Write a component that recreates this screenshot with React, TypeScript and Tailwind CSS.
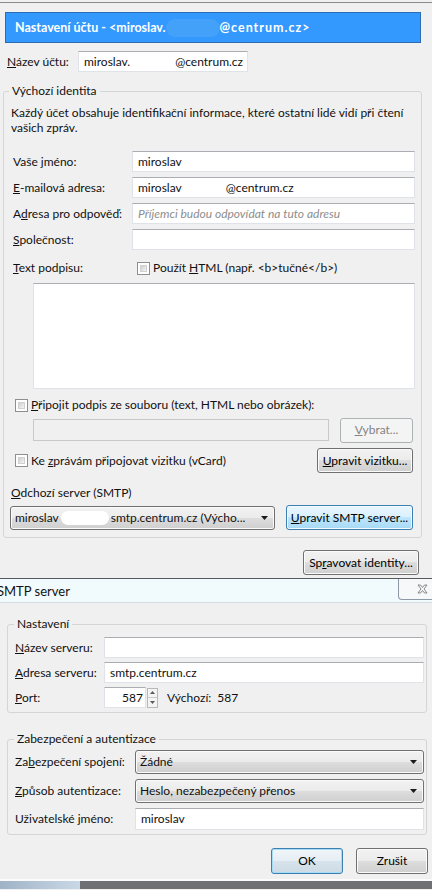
import React from 'react';

type Kind = 'normal' | 'hot' | 'default' | 'disabled';

const btnStyles: Record<Kind, string> = {
  normal:
    'border-[#707070] bg-[linear-gradient(#f2f2f2,#ebebeb_50%,#dddddd_50%,#cfcfcf)] shadow-[inset_0_0_0_1px_#fbfbfb] text-black',
  hot: 'border-[#3c7fb1] bg-[linear-gradient(#eaf6fd,#d9f0fc_50%,#bee6fd_50%,#a7d9f5)] shadow-[inset_0_0_0_1px_#f4fbfe] text-black',
  default:
    'border-[#3c7fb1] bg-[linear-gradient(#f0f5f9,#e6eef4_50%,#d7e3ec_50%,#cddbe5)] shadow-[inset_0_0_0_1px_#a6dcf6] text-black',
  disabled: 'border-[#adb2b5] bg-[#f4f4f4] text-[#838383]',
};

const Btn = ({
  kind = 'normal',
  className = '',
  children,
}: {
  kind?: Kind;
  className?: string;
  children: React.ReactNode;
}) => (
  <div
    className={`flex items-center justify-center rounded-[3px] border shrink-0 ${btnStyles[kind]} ${className}`}
  >
    {children}
  </div>
);

const Field = ({ className = '', children }: { className?: string; children?: React.ReactNode }) => (
  <div
    className={`flex items-center bg-white border border-[#dfe3e8] border-t-[#abadb3] shrink-0 whitespace-nowrap overflow-hidden ${className}`}
  >
    {children}
  </div>
);

const Check = () => (
  <span className="inline-block w-[13px] h-[13px] border border-[#8e8f8f] bg-white p-[2px] shrink-0">
    <span className="block w-full h-full bg-[linear-gradient(135deg,#cfcfcf,#f4f4f4)] border border-[#d0d0d0]" />
  </span>
);

const Arrow = () => (
  <svg width="7" height="4" viewBox="0 0 7 4" className="shrink-0">
    <path d="M0 0h7L3.5 4z" fill="#1a1a1a" />
  </svg>
);

const Combo = ({ className = '', children }: { className?: string; children: React.ReactNode }) => (
  <div
    className={`flex items-center rounded-[3px] border border-[#707070] bg-[linear-gradient(#f2f2f2,#ebebeb_50%,#dddddd_50%,#cfcfcf)] shadow-[inset_0_0_0_1px_#fbfbfb] pl-[4px] pr-[6px] shrink-0 whitespace-nowrap ${className}`}
  >
    <div className="flex-1 flex items-center overflow-hidden">{children}</div>
    <Arrow />
  </div>
);

export default function App() {
  return (
    <div className="relative w-[432px] h-[890px] overflow-hidden bg-[#f0f0f0] text-[12px] leading-[16px] text-[#111] font-['Lato','Noto_Sans',sans-serif]">
      {/* account settings window */}
      <div className="h-[578px] pt-[2px] flex flex-col">
        <div className="border-t border-[#8a8a8a]" />

        <div className="mt-[9px] ml-[5px] w-[416px] h-[31px] bg-[#3399ff] border border-[#2c6cb4] flex items-center pl-[9px] text-white font-bold text-[12.5px] whitespace-nowrap">
          <span>Nastavení účtu - &lt;miroslav.</span>
          <span className="inline-block w-[54px] h-[18px] rounded-full bg-[#44a1fa]" />
          <span className="tracking-[1px]">@centrum.cz&gt;</span>
        </div>

        <div className="mt-[8px] flex items-center h-[21px]">
          <span className="pl-[7px] w-[78px]">
            <u>N</u>ázev účtu:
          </span>
          <Field className="w-[170px] h-[21px] pl-[5px]">
            <span>miroslav.</span>
            <span className="inline-block w-[45px]" />
            <span>@centrum.cz</span>
          </Field>
        </div>

        <fieldset className="mt-[11px] ml-[3px] w-[419px] border border-[#d5d5d5] rounded-[3px] pb-[7px]">
          <legend className="ml-[5px] px-[3px]">Výchozí identita</legend>
          <p className="mt-[6px] pl-[7px] leading-[15px] whitespace-nowrap">
            Každý účet obsahuje identifikační informace, které ostatní lidé vidí při čtení
            <br />
            vašich zpráv.
          </p>

          <div className="mt-[16px] flex flex-col gap-[5px]">
            <div className="flex items-center h-[21px]">
              <span className="pl-[9px] w-[128px]">
                Vaše <u>j</u>méno:
              </span>
              <Field className="w-[283px] h-[21px] pl-[5px]">miroslav</Field>
            </div>
            <div className="flex items-center h-[21px]">
              <span className="pl-[9px] w-[128px]">
                <u>E</u>-mailová adresa:
              </span>
              <Field className="w-[283px] h-[21px] pl-[5px]">
                <span>miroslav</span>
                <span className="inline-block w-[44px]" />
                <span>@centrum.cz</span>
              </Field>
            </div>
            <div className="flex items-center h-[21px]">
              <span className="pl-[9px] w-[128px]">
                A<u>d</u>resa pro odpověď:
              </span>
              <Field className="w-[283px] h-[21px] pl-[5px]">
                <span className="italic text-[#8d8d8d]">Příjemci budou odpovídat na tuto adresu</span>
              </Field>
            </div>
            <div className="flex items-center h-[21px]">
              <span className="pl-[9px] w-[128px]">
                <u>S</u>polečnost:
              </span>
              <Field className="w-[283px] h-[21px]" />
            </div>
          </div>

          <div className="mt-[10px] flex items-center h-[16px]">
            <span className="pl-[9px] w-[133px]">
              <u>T</u>ext podpisu:
            </span>
            <Check />
            <span className="ml-[3px]">
              Použít <u>H</u>TML (např. &lt;b&gt;tučné&lt;/b&gt;)
            </span>
          </div>

          <Field className="mt-[7px] ml-[29px] w-[382px] h-[106px]" />

          <div className="mt-[8px] flex items-center h-[16px] pl-[11px]">
            <Check />
            <span className="ml-[3px]">
              <u>P</u>řipojit podpis ze souboru (text, HTML nebo obrázek):
            </span>
          </div>

          <div className="mt-[4px] flex items-center h-[26px] pl-[29px]">
            <div className="w-[296px] h-[22px] border border-[#c9c9c9] bg-[#f0f0f0]" />
            <Btn kind="disabled" className="ml-[11px] w-[73px] h-[25px]">
              <span>
                <u>V</u>ybrat...
              </span>
            </Btn>
          </div>

          <div className="mt-[5px] flex items-center h-[25px] pl-[11px]">
            <Check />
            <span className="ml-[3px] flex-1">
              Ke <u>z</u>právám připojovat vizitku (vCard)
            </span>
            <Btn className="mr-[8px] w-[96px] h-[25px]">
              <span>
                <u>U</u>pravit vizitku...
              </span>
            </Btn>
          </div>

          <div className="mt-[12px] pl-[7px]">
            <u>O</u>dchozí server (SMTP)
          </div>

          <div className="mt-[4px] flex items-center h-[25px] pl-[6px]">
            <Combo className="w-[265px] h-[24px]">
              <span>miroslav</span>
              <span className="inline-block w-[48px] h-[14px] mx-[2px] rounded-full bg-white" />
              <span>smtp.centrum.cz (Výcho...</span>
            </Combo>
            <Btn kind="hot" className="ml-[11px] w-[127px] h-[25px]">
              <span>
                <u>U</u>pravit SMTP server...
              </span>
            </Btn>
          </div>
        </fieldset>

        <Btn className="mt-[12px] ml-[303px] w-[116px] h-[25px]">
          <span>
            Sp<u>r</u>avovat identity...
          </span>
        </Btn>
      </div>

      {/* SMTP server dialog */}
      <div className="border-t border-[#555a5f]">
        <div className="relative h-[24px] bg-[#f1fbfe] border-b border-[#d4dde3] flex items-center text-[13px]">
          <span className="-ml-[3px]">SMTP server</span>
          <div className="absolute right-0 top-0 w-[34px] h-[21px] border border-t-0 border-r-0 border-[#8d9aa5] rounded-bl-[4px] bg-[#f6f8fa] flex items-center justify-end pr-[4px]">
            <svg width="11" height="10" viewBox="0 0 11 10">
              <path
                d="M1 1h2.5L5.5 3.5 7.5 1H10L7 5l3 4H7.5L5.5 6.5 3.5 9H1l3-4z"
                fill="#fafafa"
                stroke="#7b7b7b"
                strokeWidth="0.9"
                strokeLinejoin="round"
              />
            </svg>
          </div>
        </div>

        <fieldset className="mt-[13px] ml-[7px] w-[420px] border border-[#d5d5d5] rounded-[3px] pb-[4px]">
          <legend className="ml-[6px] px-[3px]">Nastavení</legend>
          <div className="mt-[5px] flex flex-col gap-[4px]">
            <div className="flex items-center h-[21px]">
              <span className="pl-[7px] w-[96px]">
                <u>N</u>ázev serveru:
              </span>
              <Field className="w-[320px] h-[21px]" />
            </div>
            <div className="flex items-center h-[21px]">
              <span className="pl-[7px] w-[96px]">
                <u>A</u>dresa serveru:
              </span>
              <Field className="w-[320px] h-[21px] pl-[5px]">smtp.centrum.cz</Field>
            </div>
            <div className="flex items-center h-[21px]">
              <span className="pl-[7px] w-[96px]">
                <u>P</u>ort:
              </span>
              <Field className="w-[42px] h-[21px] justify-end pr-[2px]">587</Field>
              <div className="ml-[1px] w-[11px] h-[20px] flex flex-col border border-[#b5b9bd] bg-[#f4f4f4]">
                <div className="flex-1 flex items-center justify-center border-b border-[#c8ccd0]">
                  <svg width="5" height="3" viewBox="0 0 5 3">
                    <path d="M0 3h5L2.5 0z" fill="#5a5a5a" />
                  </svg>
                </div>
                <div className="flex-1 flex items-center justify-center">
                  <svg width="5" height="3" viewBox="0 0 5 3">
                    <path d="M0 0h5L2.5 3z" fill="#5a5a5a" />
                  </svg>
                </div>
              </div>
              <span className="ml-[9px]">Výchozí:</span>
              <span className="ml-[6px]">587</span>
            </div>
          </div>
        </fieldset>

        <fieldset className="mt-[18px] ml-[7px] w-[420px] border border-[#d5d5d5] rounded-[3px] pb-[4px]">
          <legend className="ml-[6px] px-[3px]">Zabezpečení a autentizace</legend>
          <div className="mt-[3px] flex flex-col gap-[5px]">
            <div className="flex items-center h-[24px]">
              <span className="pl-[7px] w-[127px]">
                Za<u>b</u>ezpečení spojení:
              </span>
              <Combo className="w-[289px] h-[24px]">
                <span>Žádné</span>
              </Combo>
            </div>
            <div className="flex items-center h-[24px]">
              <span className="pl-[7px] w-[127px]">
                <u>Z</u>působ autentizace:
              </span>
              <Combo className="w-[289px] h-[24px]">
                <span>Heslo, nezabezpečený přenos</span>
              </Combo>
            </div>
            <div className="flex items-center h-[22px]">
              <span className="pl-[7px] w-[127px]">Uživatelské jméno:</span>
              <Field className="w-[289px] h-[22px] pl-[5px]">miroslav</Field>
            </div>
          </div>
        </fieldset>

        <div className="mt-[13px] flex justify-end gap-[13px] pr-[4px]">
          <Btn kind="default" className="w-[72px] h-[26px]">
            OK
          </Btn>
          <Btn className="w-[72px] h-[26px]">Zrušit</Btn>
        </div>

        <div className="mt-[5px] h-[2px] bg-[#fbfbfb]" />
        <div className="flex h-[8px]">
          <div className="w-[80px] bg-[linear-gradient(90deg,#9fb3c6,#c9d8e6)]" />
          <div className="flex-1 bg-[#6e7073]" />
        </div>
      </div>
    </div>
  );
}
